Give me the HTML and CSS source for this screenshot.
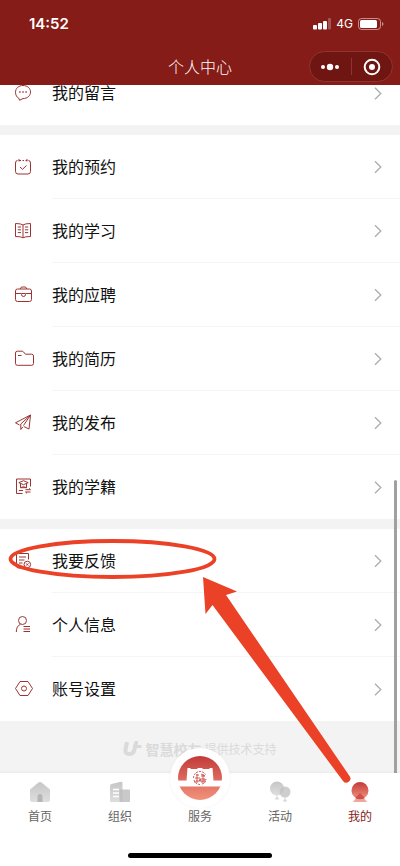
FILE: index.html
```html
<!DOCTYPE html>
<html lang="zh-CN">
<head>
<meta charset="utf-8">
<meta name="viewport" content="width=device-width, initial-scale=1">
<title>个人中心</title>
<link rel="stylesheet" href="styles.css">
</head>
<body>
<svg class="defs" aria-hidden="true">
  <defs>
    <linearGradient id="red" x1="0" y1="0" x2="0" y2="1"><stop offset="0" stop-color="#c23a3a"/><stop offset="1" stop-color="#f2937c"/></linearGradient>
    <linearGradient id="grey" x1="0" y1="0" x2="0" y2="1"><stop offset="0" stop-color="#c6c6c6"/><stop offset="1" stop-color="#dedede"/></linearGradient>
    <symbol id="chevron" viewBox="0 0 8 14"><path d="M1 1.200 6.800 7 1 12.800"/></symbol>
  </defs>
</svg>

<header class="header">
  <div class="status">
    <span class="time">14:52</span>
    <div class="signals">
      <svg width="18" height="12" viewBox="0 0 18 12" fill="#fff"><rect y="7" width="4" height="4.500" rx="1"/><rect x="5" y="5" width="4" height="6.500" rx="1"/><rect x="10" y="3" width="4" height="8.500" rx="1"/><rect x="15" y="0" width="3" height="11.500" rx="1" opacity=".25"/></svg>
      <span class="network">4G</span>
      <svg width="26" height="12" viewBox="0 0 26 12"><rect x=".5" y=".5" width="22" height="11" rx="3" fill="none" stroke="#fff" opacity=".5"/><rect x="2" y="2" width="17" height="8" rx="1.500" fill="#fff"/><path d="M24 4v4q1.500-.5 1.500-2T24 4" fill="#fff" opacity=".5"/></svg>
    </div>
  </div>
  <div class="titlebar">
    <h1 class="title">个人中心</h1>
    <div class="capsule">
      <button class="capsule-button" type="button" aria-label="更多"><svg width="20" height="8" viewBox="0 0 20 8" fill="#fff"><circle cx="3" cy="4" r="2"/><circle cx="10" cy="4" r="3.200"/><circle cx="17" cy="4" r="2"/></svg></button>
      <button class="capsule-button" type="button" aria-label="关闭"><svg width="18" height="18" viewBox="0 0 18 18"><circle cx="9" cy="9" r="7.300" fill="none" stroke="#fff" stroke-width="2"/><circle cx="9" cy="9" r="3" fill="#fff"/></svg></button>
    </div>
  </div>
</header>

<main class="content">
  <nav class="group group-scrolled">
    <a class="row" href="#"><svg class="icon" viewBox="0 0 20 20"><path d="M5 15.500C2.800 14.300 1.500 12 1.500 9.300 1.500 5.200 4.800 2.500 9 2.500s7.500 2.700 7.500 6.500-3.300 6.600-7.500 6.600L5.500 17.200z"/><path d="M5.200 9h1.400m1.700 0h1.400m1.700 0h1.400" stroke-width="1.500"/></svg><span class="label">我的留言</span><svg class="chevron"><use href="#chevron"/></svg></a>
  </nav>
  <nav class="group">
    <a class="row" href="#"><svg class="icon" viewBox="0 0 20 20"><path d="M3.500 3.500Q1.500 3.500 1.500 6v8.500q0 2.500 2.500 2.500h10q2.500 0 2.500-2.500V6q0-2.500-2-2.500M5 3.500h2m1.500 0h1.500m1.500 0h1.500M5 2v2.500M13 2v2.500M6 10l2.500 2.300L12.500 8.500"/></svg><span class="label">我的预约</span><svg class="chevron"><use href="#chevron"/></svg></a>
    <a class="row" href="#"><svg class="icon" viewBox="0 0 20 20"><path d="M9 4Q7 2.500 1.500 2.500v13Q7 15.500 9 16.800q2-1.300 7.500-1.300v-13Q11 2.500 9 4zv12.500M3.800 6H7M3.800 8.800H7M3.800 11.600H7M11 6h3.200M11 8.800h3.200M11 11.600h3.200"/></svg><span class="label">我的学习</span><svg class="chevron"><use href="#chevron"/></svg></a>
    <a class="row" href="#"><svg class="icon" viewBox="0 0 20 20"><rect x="1.500" y="4" width="16" height="12.500" rx="2"/><path d="M6.500 4q0-2 1.500-2h3q1.500 0 1.500 2M1.500 8.500H7m5 0h5.500M7.500 8.500v1q0 2 2 2t2-2v-1z"/></svg><span class="label">我的应聘</span><svg class="chevron"><use href="#chevron"/></svg></a>
    <a class="row" href="#"><svg class="icon" viewBox="0 0 20 20"><path d="M1.500 4q0-1.800 1.800-1.800H8Q9 2.200 9.600 3l1.800 2.200h6.300q1.800 0 1.800 1.800v7.500q0 1.800-1.800 1.800H3.300q-1.800 0-1.800-1.800zM4 6.500h3.500"/></svg><span class="label">我的简历</span><svg class="chevron"><use href="#chevron"/></svg></a>
    <a class="row" href="#"><svg class="icon" viewBox="0 0 20 20"><path d="M5.500 12 1.500 9.800 16.500 2 15 16 9.800 13.500M16.500 2 6.800 11v5.500L8.800 14M16.500 2 9.500 12.500"/></svg><span class="label">我的发布</span><svg class="chevron"><use href="#chevron"/></svg></a>
    <a class="row" href="#"><svg class="icon" viewBox="0 0 20 20"><path d="M16.500 9.500V2H2.500v14.500h6M4.800 5.700 9.500 3.700l4.700 2-4.700 2zM6.500 6.700v4h6v-4M6.500 10.700q3-2 6 0M4.800 13.500H9M11.500 12.700h5l-1.500-1.400M16.500 15h-5l1.500 1.400"/></svg><span class="label">我的学籍</span><svg class="chevron"><use href="#chevron"/></svg></a>
  </nav>
  <nav class="group">
    <a class="row" href="#"><svg class="icon" viewBox="0 0 20 20"><path d="M14.500 8.500V2.500H2.500v12.500q0 2 2 2h5M5 6h7M5 9h5.500M5 12h3.500"/><circle cx="13.300" cy="13.500" r="3.300"/><path d="m12.200 12.400 2.200 2.200m0-2.200-2.200 2.200"/></svg><span class="label">我要反馈</span><svg class="chevron"><use href="#chevron"/></svg></a>
    <a class="row" href="#"><svg class="icon" viewBox="0 0 20 20"><circle cx="8.500" cy="5.500" r="4"/><path d="M2.300 17q0-6 4.200-7.700M9.500 11.500H16M9.500 14H16M9.500 16.500H16"/></svg><span class="label">个人信息</span><svg class="chevron"><use href="#chevron"/></svg></a>
    <a class="row" href="#"><svg class="icon" viewBox="0 0 20 20"><path d="M6 2.500h8L18.500 9.500l-4.500 7H6L1.500 9.500z"/><circle cx="10" cy="9.500" r="2.500"/></svg><span class="label">账号设置</span><svg class="chevron"><use href="#chevron"/></svg></a>
  </nav>
  <p class="support">
    <svg width="19" height="16" viewBox="0 0 19 16" fill="none" stroke="#dadada" stroke-width="4"><path d="M4 1 2.500 8.500Q2 13 6 13q4.500 0 5.500-4.500L13 2q.5-1 2-1"/><path d="M10 5.500h8.500" stroke-width="3"/></svg>
    <strong class="brand">智慧校友</strong><span>提供技术支持</span>
  </p>
  <div class="scrollbar"></div>
</main>

<nav class="tabbar">
  <a class="tab" href="#"><svg class="tab-icon" viewBox="0 0 22 22"><path d="M1 8.500 9.500 1.500q1.500-1 3 0L21 8.500V19q0 2-2 2H3q-2 0-2-2z" fill="url(#grey)"/><path d="M8.500 21v-5q0-3 2.500-3t2.500 3v5z" fill="#b5b5b5"/></svg><span>首页</span></a>
  <a class="tab" href="#"><svg class="tab-icon" viewBox="0 0 22 22"><path d="M1 5q0-1.500 1.500-2L12 .8q1.500 0 1.500 1.500V21H1z" fill="url(#grey)"/><path d="M4 8.500h6M4 12h6M4 15.500h6" stroke="#fff" stroke-width="1.500"/><rect x="10.500" y="8.500" width="10.500" height="12.500" rx="1" fill="#bbb" opacity=".8"/></svg><span>组织</span></a>
  <a class="tab" href="#"><span class="service"><svg width="44" height="44" viewBox="0 0 44 44"><circle cx="22" cy="22" r="22" fill="url(#red)"/><path d="M0 24.500h8.500L9.500 12h3v1h7v-1h5v1h7v-1h3l1 12.500H44V30.500H0z" fill="#fff"/><g fill="none" stroke="#c94b48" stroke-width=".9"><path d="M15.500 22a6.500 6.500 0 0 1 12-3.500M16 24q1 4 6 4.500M24 28q4-1 4-5" stroke-dasharray="2 1"/><path d="M18 19h3m-2-1v7m-2-3h5m-4 3h4v-2m1-5 4 2m-4 0h4m-2-2v7m-3-2h5v2h-5zM16 26h4m3 0h4"/></g></svg></span><span>服务</span></a>
  <a class="tab" href="#"><svg class="tab-icon" viewBox="0 0 22 22"><path d="M8 14v4m-2 0 2-2 2 2zM16 15v6m-2-1 2-2 2 2z" fill="#ddd" stroke="#ddd"/><circle cx="8" cy="7.500" r="7" fill="url(#grey)"/><circle cx="16" cy="11" r="5.500" fill="#c2c2c2" opacity=".8"/></svg><span>活动</span></a>
  <a class="tab tab-active" href="#"><svg class="tab-icon" viewBox="0 0 22 22"><path d="m11 12 7 9H4z" fill="#eea79d"/><circle cx="11" cy="9.500" r="8.500" fill="url(#red)"/><path d="m11 12 5 5q-5 2.500-10 0z" fill="#cf514b"/></svg><span>我的</span></a>
</nav>
<div class="home-indicator"></div>

<svg class="markup" width="400" height="866" viewBox="0 0 400 866" aria-hidden="true">
  <ellipse cx="112.500" cy="559" rx="102" ry="18" fill="none" stroke="#ea4127" stroke-width="3.800"/>
  <path d="M203 577 237 591.500 226 595 349.500 776A4 4 0 0 1 343 781L212.500 605 205.500 614z" fill="#ea4127"/>
</svg>
</body>
</html>
```
FILE: styles.css
```css
* {
  box-sizing: border-box;
}

body {
  position: relative;
  display: flex;
  flex-direction: column;
  min-height: 100vh;
  margin: 0;
  background: #fff;
  color: #111;
  font-family: "Noto Sans CJK SC", sans-serif;
  font-size: 16px;
}

a {
  color: inherit;
  text-decoration: none;
}

svg {
  display: block;
  flex: none;
}

.defs {
  position: absolute;
  width: 0;
  height: 0;
}

.header {
  position: relative;
  z-index: 1;
  background: #861c17;
  color: #fff;
}

.status {
  display: flex;
  align-items: center;
  justify-content: space-between;
  height: 48px;
  padding: 0 16px 0 29px;
}

.time {
  font: 600 15px/20px Inter, sans-serif;
}

.signals {
  display: flex;
  align-items: center;
  gap: 5px;
}

.network {
  font: 12px/16px Inter, sans-serif;
}

.titlebar {
  display: grid;
  grid-template-columns: 1fr auto 1fr;
  align-items: center;
  height: 37px;
  padding: 0 7px;
}

.title {
  grid-column: 2;
  margin: 0;
  padding-bottom: 2px;
  font-size: 16px;
  font-weight: 300;
  line-height: 24px;
}

.capsule {
  display: flex;
  justify-self: end;
  width: 84px;
  height: 31px;
  border: 1px solid #8f3430;
  border-radius: 16px;
  background: #701612;
}

.capsule-button {
  display: flex;
  flex: 1;
  align-items: center;
  justify-content: center;
  margin: 6px 0;
  padding: 0;
  border: 0;
  background: none;
}

.capsule-button + .capsule-button {
  border-left: 1px solid #8f3430;
}

.content {
  position: relative;
  display: flex;
  flex: 1;
  flex-direction: column;
  gap: 10px;
  background: #f3f3f3;
}

.group {
  background: #fff;
}

.group-scrolled {
  margin-top: -24px;
}

.row {
  display: flex;
  align-items: center;
  height: 64px;
  padding-left: 14px;
}

.icon {
  width: 20px;
  height: 20px;
  margin-right: 18px;
  fill: none;
  stroke: #9c3532;
  stroke-width: 1;
}

.label {
  flex: 1;
  height: 64px;
  line-height: 62px;
}

.row:not(:last-child) .label,
.row:not(:last-child) .chevron {
  border-bottom: 1px solid #f5f5f5;
}

.chevron {
  width: 26px;
  height: 64px;
  padding: 25px 18px 24px 0;
  fill: none;
  stroke: #adadad;
  stroke-width: 1.3;
}

.support {
  display: flex;
  align-items: center;
  justify-content: center;
  gap: 3px;
  margin: 8px 0 0;
  color: #dadada;
  font-size: 12px;
  line-height: 20px;
}

.brand {
  font-size: 14px;
}

.scrollbar {
  position: absolute;
  right: 3px;
  bottom: 0;
  width: 3px;
  height: 293px;
  border-radius: 2px 2px 0 0;
  background: #a0a0a0;
}

.tabbar {
  position: relative;
  display: grid;
  grid-template-columns: repeat(5, 1fr);
  height: 80px;
  background: #fff;
  box-shadow: 0 -1px 2px #0000000a;
  color: #666;
  font-size: 12px;
  line-height: 18px;
}

.tab {
  display: flex;
  flex-direction: column;
  align-items: center;
  gap: 4px;
  padding-top: 8px;
}

.tab-icon {
  width: 22px;
  height: 22px;
}

.tab-active {
  color: #861c17;
}

.service {
  display: flex;
  align-items: center;
  justify-content: center;
  width: 60px;
  height: 60px;
  margin: -33px 0 -5px;
  border-radius: 50%;
  background: #fff;
  box-shadow: 0 0 3px #0000000f;
}

.home-indicator {
  width: 36%;
  height: 5px;
  margin: 0 auto 8px;
  border-radius: 3px;
  background: #000;
}

.markup {
  position: absolute;
  top: 0;
  left: 0;
  pointer-events: none;
}
```
